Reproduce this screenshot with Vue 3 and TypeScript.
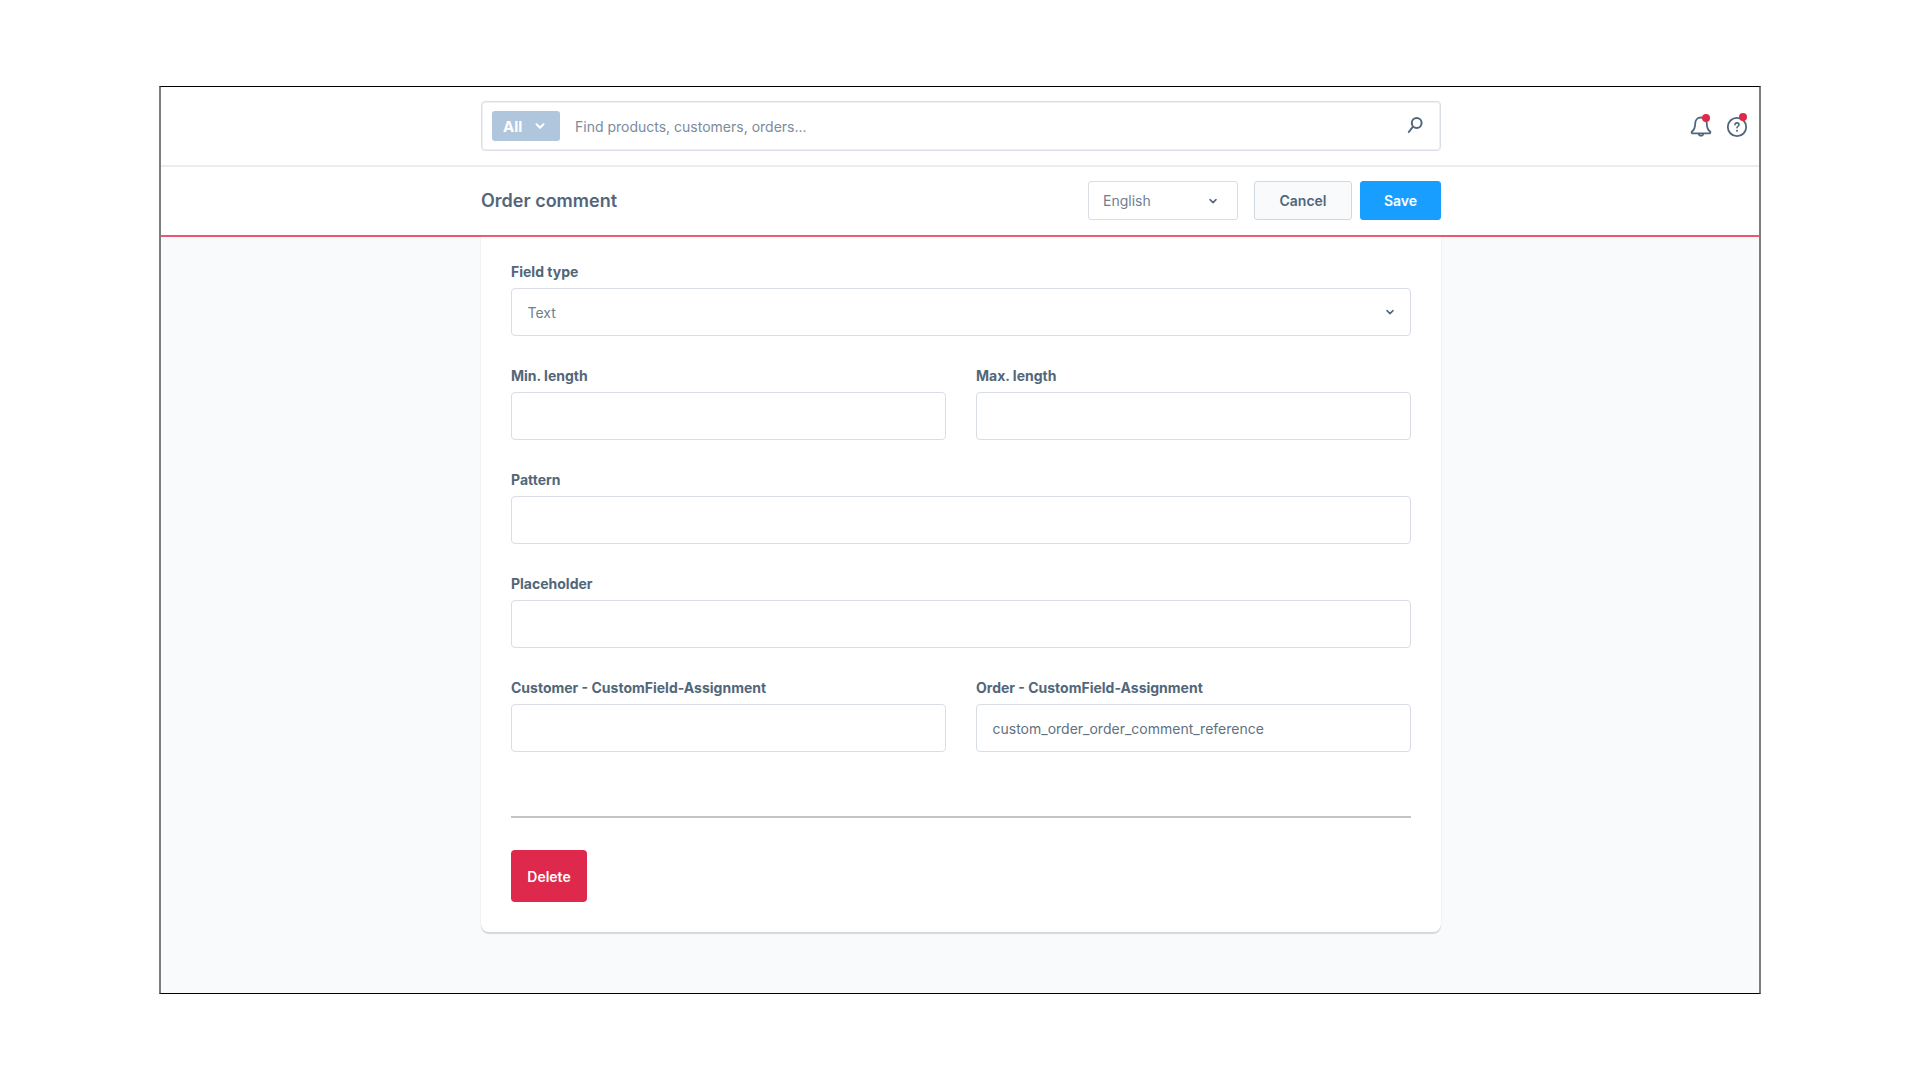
<script setup lang="ts">
interface Field { label: string; value?: string }
const rows: Field[][] = [
  [{ label: 'Min. length' }, { label: 'Max. length' }],
  [{ label: 'Pattern' }],
  [{ label: 'Placeholder' }],
  [{ label: 'Customer - CustomField-Assignment' }, { label: 'Order - CustomField-Assignment', value: 'custom_order_order_comment_reference' }],
]
</script>

<template>
  <div class="frame">
    <header class="topbar">
      <div class="search">
        <button class="all">All
          <svg width="12" height="12" viewBox="0 0 12 12"><path d="M2.5 4.2 6 7.7l3.5-3.5" fill="none" stroke="#fff" stroke-width="2" stroke-linecap="round" stroke-linejoin="round"/></svg>
        </button>
        <span class="placeholder">Find products, customers, orders...</span>
        <svg class="mag" width="18" height="18" viewBox="0 0 18 18"><circle cx="10.7" cy="6" r="4.9" fill="none" stroke="#52667a" stroke-width="2"/><path d="M7 9.7 2.8 15" fill="none" stroke="#52667a" stroke-width="2" stroke-linecap="round"/></svg>
      </div>
      <div class="icons">
        <span class="icon">
          <svg width="24" height="24" viewBox="0 0 24 24"><path d="M12 2.500c-3.700 0-5.800 2.800-5.800 6.200 0 4.200-1 6-3.200 7.800-.8.7-.4 1.800.6 1.800h16.800c1 0 1.400-1.100.6-1.800-2.200-1.800-3.200-3.600-3.200-7.800 0-3.400-2.100-6.200-5.800-6.200Z" fill="none" stroke="#52667a" stroke-width="1.800"/><path d="M9.800 18.500a2.200 2.200 0 0 0 4.400 0" fill="none" stroke="#52667a" stroke-width="1.800"/></svg>
          <i class="dot dot-bell"></i>
        </span>
        <span class="icon">
          <svg width="24" height="24" viewBox="0 0 24 24"><circle cx="12" cy="12" r="9.200" fill="none" stroke="#52667a" stroke-width="1.800"/><path d="M10 9.800c0-1.200.9-1.900 2-1.900s2 .7 2 1.800c0 1.500-2 1.600-2 3.100" fill="none" stroke="#52667a" stroke-width="1.600" stroke-linecap="round"/><circle cx="12" cy="15.700" r="1" fill="#52667a"/></svg>
          <i class="dot dot-help"></i>
        </span>
      </div>
    </header>

    <div class="actionbar">
      <div class="actionbar-inner">
        <h1 class="title">Order comment</h1>
        <div class="lang">
          <span>English</span>
          <svg width="12" height="12" viewBox="0 0 12 12"><path d="M3 4.600 6 7.600l3-3" fill="none" stroke="#52667a" stroke-width="1.500" stroke-linecap="round" stroke-linejoin="round"/></svg>
        </div>
        <button class="btn cancel">Cancel</button>
        <button class="btn save">Save</button>
      </div>
    </div>

    <main class="content">
      <section class="card">
        <div class="field">
          <label class="label">Field type</label>
          <div class="input select">
            <span>Text</span>
            <svg width="12" height="12" viewBox="0 0 12 12"><path d="M3 4.600 6 7.600l3-3" fill="none" stroke="#52667a" stroke-width="1.500" stroke-linecap="round" stroke-linejoin="round"/></svg>
          </div>
        </div>
        <div v-for="(row, i) in rows" :key="i" class="row">
          <div v-for="f in row" :key="f.label" class="field">
            <label class="label">{{ f.label }}</label>
            <div class="input">{{ f.value }}</div>
          </div>
        </div>
        <hr class="divider" />
        <button class="delete">Delete</button>
      </section>
    </main>
  </div>
</template>

<style>
body { margin: 0; background: #fff; }
</style>

<style scoped>
.frame {
  box-sizing: border-box;
  width: 1602px;
  height: 908px;
  margin: 86px 0 0 159px;
  border-top: 1px solid #000;
  border-bottom: 1px solid #000;
  border-left: 2px solid #7d7d7d;
  border-right: 2px solid #7d7d7d;
  background: #f9fafb;
  font-family: Inter, "Noto Sans", sans-serif;
  color: #52667a;
  display: flex;
  flex-direction: column;
}
.topbar {
  height: 80px;
  flex: none;
  box-sizing: border-box;
  background: #fff;
  border-bottom: 2px solid #e9edf0;
  display: flex;
  justify-content: center;
  align-items: flex-start;
  padding: 14px 0 0 2px;
  position: relative;
}
.search {
  box-sizing: border-box;
  width: 960px;
  height: 50px;
  border: 1px solid #d8dee4;
  border-radius: 4px;
  box-shadow: 0 0 0 1px #eef1f4 inset;
  display: flex;
  align-items: center;
  padding: 0 16px 0 10px;
}
.all {
  width: 68px;
  height: 30px;
  border: 0;
  border-radius: 3px;
  background: #afc6dd;
  color: #fff;
  font: 700 15px Inter, sans-serif;
  display: flex;
  align-items: center;
  gap: 12px;
  padding: 0 0 0 11px;
}
.placeholder { margin-left: 15px; font-size: 14px; color: #7c8b9a; flex: 1; }
.mag { flex: none; }
.icons { position: absolute; right: 10px; top: 28px; display: flex; gap: 12px; }
.icon { position: relative; width: 24px; height: 24px; display: block; }
.dot { position: absolute; width: 8px; height: 8px; border-radius: 50%; background: #de294c; }
.dot-bell { left: 13px; top: -1px; }
.dot-help { left: 14px; top: -2px; }
.actionbar {
  height: 70px;
  flex: none;
  box-sizing: border-box;
  background: #fff;
  border-bottom: 2px solid #ef5570;
  display: flex;
  justify-content: center;
  align-items: flex-start;
  padding: 14px 0 0 2px;
}
.actionbar-inner { width: 960px; height: 39px; display: flex; align-items: center; }
.title { flex: 1; margin: 0; font-size: 18px; font-weight: 600; color: #52667a; }
.lang {
  box-sizing: border-box;
  width: 150px;
  height: 39px;
  border: 1px solid #d8dee4;
  border-radius: 3px;
  display: flex;
  align-items: center;
  justify-content: space-between;
  padding: 0 18px 0 14px;
  margin-right: 16px;
  font-size: 14px;
  color: #6e7f90;
}
.btn {
  box-sizing: border-box;
  height: 39px;
  border-radius: 3px;
  font: 600 14px Inter, sans-serif;
  padding: 0;
}
.cancel { width: 98px; background: #f9fafb; border: 1px solid #d1d9e0; color: #52667a; margin-right: 8px; }
.save { width: 81px; background: #189eff; border: 1px solid #189eff; color: #fff; }
.content { flex: 1; display: flex; justify-content: center; align-items: flex-start; padding-left: 2px; }
.card {
  box-sizing: border-box;
  width: 960px;
  height: 695px;
  background: #fff;
  border-radius: 0 0 8px 8px;
  box-shadow: 0 0 1px #d4d6d8, 0 2px 1px #d6d8da;
  padding: 26px 30px 0;
}
.field { flex: 1; min-width: 0; }
.label { display: block; font-size: 14px; font-weight: 700; line-height: 17px; color: #52667a; margin-bottom: 8px; }
.input {
  box-sizing: border-box;
  height: 48px;
  border: 1px solid #d8dee4;
  border-radius: 4px;
  padding: 0 16px 0 15.500px;
  display: flex;
  align-items: center;
  font-size: 14px;
  color: #5f7183;
  background: #fff;
}
.select { justify-content: space-between; padding-right: 14px; color: #6e7f90; }
.row { display: flex; gap: 30px; margin-top: 31px; }
.divider { border: 0; border-top: 2px solid #c4c4c4; margin: 64px 0 32px; }
.delete {
  display: block;
  width: 76px;
  height: 52px;
  border: 0;
  border-radius: 4px;
  background: #de294c;
  color: #fff;
  font: 600 14px Inter, sans-serif;
  padding: 0;
}
</style>
